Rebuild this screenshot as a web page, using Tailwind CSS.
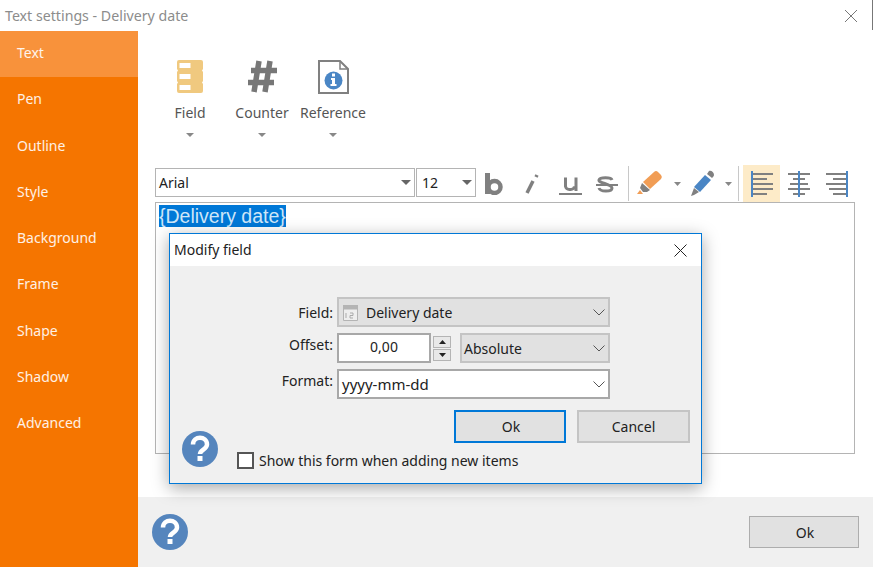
<!DOCTYPE html>
<html lang="en">
<head>
    <meta charset="UTF-8">
    <meta name="viewport" content="width=device-width, initial-scale=1.0">
    <title>Text settings - Delivery date</title>
    <script src="https://cdn.jsdelivr.net/npm/@tailwindcss/browser@4"></script>
</head>
<body class="bg-white text-[#333] overflow-hidden font-['Noto_Sans','Open_Sans',sans-serif] text-[14px]">
    <div class="relative w-[873px] h-[567px] overflow-hidden">

        <!-- title bar -->
        <div class="h-[31px] flex items-center justify-between pl-[5px] pr-[15px] text-[#8c8c8c] text-[14.2px]">
            <span>Text settings - Delivery date</span>
            <svg width="14" height="14" viewBox="0 0 14 14" stroke="#777" fill="none"><path d="M1 1l12 12M13 1L1 13"/></svg>
        </div>
        <div class="absolute right-0 top-0 w-px h-[30px] bg-[#777]"></div>

        <div class="flex h-[536px]">
            <!-- sidebar -->
            <nav class="w-[138px] shrink-0 bg-[#f57500] text-white/90 flex flex-col">
                <a class="h-[46px] flex items-center pl-[17px] bg-[#f8923b] pb-[4px]">Text</a>
                <a class="h-[46.25px] flex items-center pl-[17px] pb-[4px]">Pen</a>
                <a class="h-[46.25px] flex items-center pl-[17px] pb-[2px]">Outline</a>
                <a class="h-[46.25px] flex items-center pl-[17px] pb-[2px]">Style</a>
                <a class="h-[46.25px] flex items-center pl-[17px] pb-[2px]">Background</a>
                <a class="h-[46.25px] flex items-center pl-[17px] pb-[4px]">Frame</a>
                <a class="h-[46.25px] flex items-center pl-[17px] pb-[2px]">Shape</a>
                <a class="h-[46.25px] flex items-center pl-[17px] pb-[2px]">Shadow</a>
                <a class="h-[46.25px] flex items-center pl-[17px] pb-[2px]">Advanced</a>
            </nav>

            <!-- main -->
            <div class="flex-1 min-w-0 flex flex-col">
                <div class="h-[466px] pl-[17px] pr-[18px] pt-[29px]">
                    <!-- big buttons -->
                    <div class="flex h-[108px] text-[#555]">
                        <button class="w-[70px] flex flex-col items-center">
                            <svg width="26" height="33" viewBox="0 0 26 33" class="mb-[10px]">
                                <path fill="#f0c97f" d="M2 0h22a2 2 0 0 1 2 2v7l-1 1.500 1 1.500v9l-1 1.500 1 1.500v7a2 2 0 0 1-2 2H2a2 2 0 0 1-2-2v-7l1-1.500-1-1.500v-9l1-1.500L0 9V2a2 2 0 0 1 2-2z"/>
                                <path fill="#fff" d="M2.500 3h11v5h-11zM2.500 14h11v5h-11zM2.500 25h11v5h-11z"/>
                            </svg>
                            <span class="leading-[19px]">Field</span>
                            <svg width="8" height="4" class="mt-[11px]"><path fill="#888" d="M0 0h8L4 4z"/></svg>
                        </button>
                        <button class="w-[70px] ml-[2px] flex flex-col items-center">
                            <svg width="30" height="33" viewBox="0 0 30 33" class="mb-[10px]" fill="none" stroke="#777" stroke-width="5.500">
                                <path d="M12 1L7 32M23 1L18 32M4 10.500h26M1 22.500h26"/>
                            </svg>
                            <span class="leading-[19px]">Counter</span>
                            <svg width="8" height="4" class="mt-[11px]"><path fill="#888" d="M0 0h8L4 4z"/></svg>
                        </button>
                        <button class="w-[70px] ml-[1px] flex flex-col items-center">
                            <svg width="31" height="34" viewBox="0 0 31 34" class="mb-[9px]">
                                <path fill="#fff" stroke="#808080" stroke-width="2" d="M1 1h21l8 8v24H1z"/>
                                <path fill="none" stroke="#808080" stroke-width="1.500" d="M22 1v8h8"/>
                                <circle cx="15.500" cy="20.500" r="9" fill="#4a86c5"/>
                                <path fill="#fff" d="M14 13.500h3v3h-3zM13 18h4v6h1.500v2h-6v-2H14v-4h-1z"/>
                            </svg>
                            <span class="leading-[19px]">Reference</span>
                            <svg width="8" height="4" class="mt-[11px]"><path fill="#888" d="M0 0h8L4 4z"/></svg>
                        </button>
                    </div>

                    <!-- toolbar -->
                    <div class="flex h-[37px] items-center -mt-[3px]">
                        <div class="w-[260px] shrink-0 h-[29px] self-start mt-[3px] border border-[#b4b4b4] flex items-center justify-between pl-[3px] pr-[3px] text-[#222]">
                            <span>Arial</span>
                            <svg width="10" height="5"><path fill="#666" d="M0 0h10L5 5z"/></svg>
                        </div>
                        <div class="w-[60px] shrink-0 h-[29px] self-start mt-[3px] ml-px border border-[#b4b4b4] flex items-center justify-between pl-[5px] pr-[3px] text-[#222]">
                            <span>12</span>
                            <svg width="10" height="5"><path fill="#666" d="M0 0h10L5 5z"/></svg>
                        </div>
                        <!-- bold -->
                        <svg width="20" height="22" viewBox="0 0 20 22" class="ml-[8px]" fill="none" stroke="#808080">
                            <path stroke-width="5" d="M3.500 0v21"/><circle cx="10.500" cy="14" r="6" stroke-width="4.500"/>
                        </svg>
                        <!-- italic -->
                        <svg width="16" height="22" viewBox="0 0 16 22" class="ml-[20px]" fill="none" stroke="#808080" stroke-width="3.500">
                            <path d="M9 8L3 20"/><path d="M13 2l-1 2"/>
                        </svg>
                        <!-- underline -->
                        <svg width="24" height="22" viewBox="0 0 24 22" class="ml-[18px]" fill="none" stroke="#808080">
                            <path stroke-width="3" d="M7.500 4.500v9a4 4 0 0 0 4 3h1a4 4 0 0 0 4-3 M18 4.500V18"/><path stroke-width="2" d="M1 21h23"/>
                        </svg>
                        <!-- strike -->
                        <svg width="24" height="22" viewBox="0 0 24 22" class="ml-[12px]" fill="none" stroke="#808080">
                            <path stroke-width="3" d="M18 7c-1-3-12-3-13 0s13 4 13 8-12 4-13 0"/><path stroke-width="2" d="M2 12h22"/>
                        </svg>
                        <div class="w-px h-[35px] bg-[#c8c8c8] ml-[10px]"></div>
                        <!-- highlighter -->
                        <svg width="30" height="28" viewBox="0 0 30 28" class="ml-[7px]">
                            <path fill="#f19d55" d="M18 2a3 3 0 0 1 4 0l3 3a3 3 0 0 1 0 4L14 19l-7-7z"/>
                            <path fill="#808080" d="M6 13l8 7-3 2H7l-3-4z"/>
                            <path fill="#f19d55" d="M4 20l3 4H1z"/>
                        </svg>
                        <svg width="7" height="4" class="ml-[8px]"><path fill="#888" d="M0 0h7L3.500 4z"/></svg>
                        <!-- pen -->
                        <svg width="26" height="28" viewBox="0 0 26 28" class="ml-[9px]">
                            <path fill="#808080" d="M19 1c2-1 5 1 5 4 0 1-1 2-2 3l-5-4z"/>
                            <path fill="#4a86c5" d="M15 5l6 5-11 12-6-5z"/>
                            <path fill="#808080" d="M4 18l5 4-5 3-3 1z"/>
                        </svg>
                        <svg width="7" height="4" class="ml-[9px]"><path fill="#888" d="M0 0h7L3.500 4z"/></svg>
                        <div class="w-px h-[35px] bg-[#c8c8c8] ml-[6px]"></div>
                        <!-- align -->
                        <div class="w-[37px] h-[37px] ml-[4px] bg-[#fdebc8] flex items-center justify-center">
                            <svg width="24" height="26" viewBox="0 0 24 26" fill="none">
                                <path stroke="#808080" stroke-width="2" d="M3 3h20M3 8h14M3 13h20M3 18h20M3 23h14"/>
                                <path stroke="#4a86c5" stroke-width="2" d="M2 0v26"/>
                            </svg>
                        </div>
                        <div class="w-[37px] h-[37px] flex items-center justify-center">
                            <svg width="24" height="26" viewBox="0 0 24 26" fill="none">
                                <path stroke="#808080" stroke-width="2" d="M1 3h22M6 8h12M3 13h18M1 18h22M6 23h12"/>
                                <path stroke="#4a86c5" stroke-width="2" d="M12 0v26"/>
                            </svg>
                        </div>
                        <div class="w-[37px] h-[37px] ml-[1px] flex items-center justify-center">
                            <svg width="24" height="26" viewBox="0 0 24 26" fill="none">
                                <path stroke="#808080" stroke-width="2" d="M1 3h20M8 8h13M1 13h20M4 18h17M8 23h13"/>
                                <path stroke="#4a86c5" stroke-width="2" d="M22 0v26"/>
                            </svg>
                        </div>
                    </div>

                    <!-- editor -->
                    <div class="h-[252px] border border-[#b4b4b4] pl-[3px] pt-[2px] font-['Liberation_Sans',sans-serif] text-[19.500px] leading-[22px]">
                        <span class="bg-[#0078d7] text-[#cfe6f8]">{Delivery date}</span>
                    </div>
                </div>

                <!-- footer -->
                <div class="h-[70px] bg-[#f0f0f0] flex items-center justify-between pl-[14px] pr-[14px]">
                    <svg width="36" height="36" viewBox="0 0 36 36">
                        <circle cx="18" cy="18" r="18" fill="#5585bd"/>
                        <path fill="none" stroke="#fff" stroke-width="4.500" d="M11 13.500c0-9 14-9 14 0 0 5-7 5-7 9.500"/>
                        <path fill="#fff" d="M15.500 25h5v5h-5z"/>
                    </svg>
                    <button class="w-[110px] h-[32px] pl-[2px] bg-[#e1e1e1] border border-[#adadad] text-[#222]">Ok</button>
                </div>
            </div>
        </div>

        <!-- modal dialog -->
        <div class="absolute left-[169px] top-[233px] w-[533px] h-[251px] bg-[#f0f0f0] border border-[#0078d7] shadow-[0_4px_16px_rgba(0,0,0,0.35)] text-[#222] flex flex-col">
            <div class="h-[32px] bg-white flex items-center justify-between pl-[4px] pr-[14px]">
                <span class="pb-[2px]">Modify field</span>
                <svg width="13" height="13" viewBox="0 0 13 13" fill="none" stroke="#222"><path d="M.500.500l12 12M12.500.500l-12 12"/></svg>
            </div>

            <div class="pt-[31px] pl-[100px] flex flex-col gap-[6px]">
                <div class="flex items-center h-[30px]">
                    <label class="w-[67px] text-right pr-[4px]">Field:</label>
                    <div class="w-[273px] h-[30px] bg-[#e1e1e1] border-2 border-[#c4c4c4] flex items-center justify-between pl-[4px] pr-[3px]">
                        <div class="flex items-center gap-[8px]">
                            <svg width="15" height="17" viewBox="0 0 15 17">
                                <path fill="#b4b4b4" d="M0 1h15v4H0z"/>
                                <path fill="#eee" stroke="#b4b4b4" d="M.500 5h14v11.500H.500z"/>
                                <path fill="none" stroke="#aaa" d="M3 9v5M7 9h3v2.500H7V14h3"/>
                            </svg>
                            <span>Delivery date</span>
                        </div>
                        <svg width="12" height="7" viewBox="0 0 12 7" fill="none" stroke="#555"><path d="M.500.500L6 6l5.500-5.500"/></svg>
                    </div>
                </div>
                <div class="flex items-center h-[30px]">
                    <label class="w-[67px] text-right pr-[4px] pb-[8px]">Offset:</label>
                    <div class="w-[94px] h-[30px] pb-[3px] bg-white border-2 border-[#a8a8a8] flex items-center justify-center">0,00</div>
                    <div class="w-[18px] ml-[2px] flex flex-col gap-px">
                        <div class="h-[12px] bg-[#e8e8e8] border border-[#b4b4b4] flex items-center justify-center"><svg width="7" height="4"><path fill="#222" d="M0 4h7L3.500 0z"/></svg></div>
                        <div class="h-[12px] bg-[#e8e8e8] border border-[#b4b4b4] flex items-center justify-center"><svg width="7" height="4"><path fill="#222" d="M0 0h7L3.500 4z"/></svg></div>
                    </div>
                    <div class="w-[150px] h-[30px] ml-[9px] bg-[#e1e1e1] border-2 border-[#c4c4c4] flex items-center justify-between pl-[2px] pr-[3px]">
                        <span>Absolute</span>
                        <svg width="12" height="7" viewBox="0 0 12 7" fill="none" stroke="#555"><path d="M.500.500L6 6l5.500-5.500"/></svg>
                    </div>
                </div>
                <div class="flex items-center h-[30px]">
                    <label class="w-[67px] text-right pr-[4px] pb-[8px]">Format:</label>
                    <div class="w-[273px] h-[30px] bg-white border-2 border-[#a8a8a8] flex items-center justify-between pl-[3px] pr-[3px]">
                        <span class="text-[15px]">yyyy-mm-dd</span>
                        <svg width="12" height="7" viewBox="0 0 12 7" fill="none" stroke="#555"><path d="M.500.500L6 6l5.500-5.500"/></svg>
                    </div>
                </div>
            </div>

            <div class="flex justify-end gap-[11px] pr-[11px] mt-[11px]">
                <button class="w-[112px] h-[33px] pl-[2px] bg-[#e1e1e1] border-2 border-[#0078d7]">Ok</button>
                <button class="w-[113px] h-[33px] bg-[#e1e1e1] border-2 border-[#c4c4c4]">Cancel</button>
            </div>

            <div class="absolute left-[12px] top-[197px]">
                <svg width="36" height="36" viewBox="0 0 36 36" class="block">
                    <circle cx="18" cy="18" r="18" fill="#5585bd"/>
                    <path fill="none" stroke="#fff" stroke-width="4.500" d="M11 13.500c0-9 14-9 14 0 0 5-7 5-7 9.500"/>
                    <path fill="#fff" d="M15.500 25h5v5h-5z"/>
                </svg>
            </div>
            <div class="absolute left-[67px] top-[216px] flex items-center gap-[5px]">
                <span class="w-[17px] h-[17px] bg-white border-2 border-[#555] block"></span>
                <span>Show this form when adding new items</span>
            </div>
        </div>
    </div>
</body>
</html>
